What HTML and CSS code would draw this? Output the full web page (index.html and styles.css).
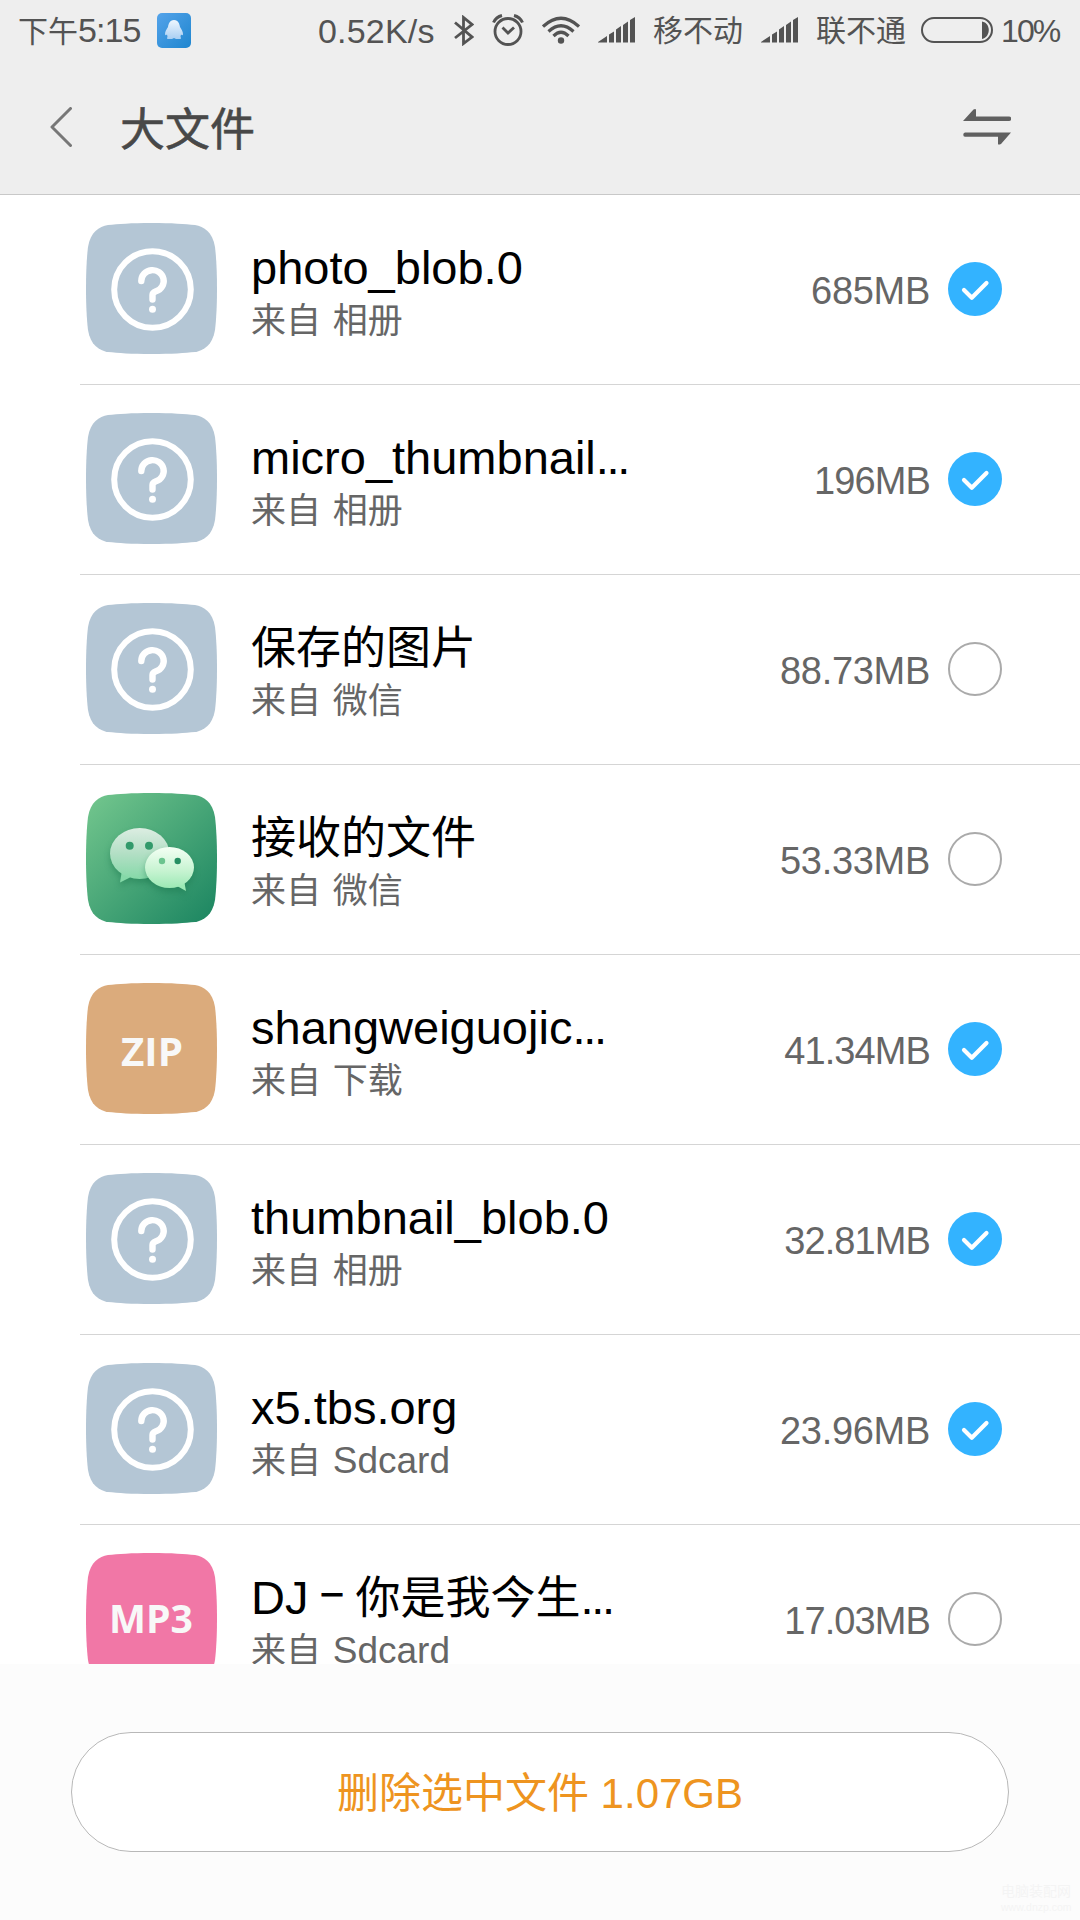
FILE: index.html
```
<!DOCTYPE html>
<html lang="zh">
	<head>
		<meta charset="utf-8">
		<title>大文件</title>
		<link rel="stylesheet" href="styles.css">
	</head>
	<body>
		<!-- shared shapes -->
		<svg class="defs">
			<defs>
				<linearGradient id="wxbg" x1="0" y1="0" x2="1" y2="1">
					<stop offset="0.05" stop-color="#70c48c"/>
					<stop offset="1" stop-color="#1a8460"/>
				</linearGradient>
				<linearGradient id="wx1" x1="0" y1="0" x2="0" y2="1">
					<stop offset="0" stop-color="#dcede2"/>
					<stop offset="0.5" stop-color="#b3dfc5"/>
					<stop offset="1" stop-color="#85d9a8"/>
				</linearGradient>
				<linearGradient id="wx2" x1="0" y1="0" x2="0" y2="1">
					<stop offset="0" stop-color="#f4fff4"/>
					<stop offset="0.6" stop-color="#c5f3d0"/>
					<stop offset="1" stop-color="#9ce9b5"/>
				</linearGradient>
				<linearGradient id="qqbg" x1="0" y1="0" x2="1" y2="1">
					<stop offset="0" stop-color="#54a3ea"/>
					<stop offset="1" stop-color="#1f86cf"/>
				</linearGradient>
				<linearGradient id="qq1" x1="0" y1="0" x2="0" y2="1">
					<stop offset="0" stop-color="#eef6fe"/>
					<stop offset="1" stop-color="#a9cff3"/>
				</linearGradient>
			</defs>
			<symbol id="tile" viewBox="0 0 131 131">
				<path d="M65.500 0C86 0 99 1 109 2C118 3.500 126.500 9 129 24C130.200 34 131 48 131 65.500C131 83 130.200 97 129 107C126.500 122 118 127.500 109 129C99 130 86 131 65.500 131C45 131 32 130 22 129C13 127.500 4.500 122 2 107C0.800 97 0 83 0 65.500C0 48 0.800 34 2 24C4.500 9 13 3.500 22 2C32 1 45 0 65.500 0Z"/>
			</symbol>
			<symbol id="unknown" viewBox="0 0 131 131">
				<use href="#tile" fill="#b4c6d5"/>
				<g fill="none" stroke="#fff" stroke-linecap="round" stroke-linejoin="round">
					<circle cx="66.500" cy="66.500" r="38.300" stroke-width="6"/>
					<path d="M55.300 58A11.200 10.800 0 1 1 70 68.200Q66.500 69.500 66.500 72V76.500" stroke-width="6.400"/>
				</g>
				<circle cx="66.500" cy="86.300" r="3.500" fill="#fff"/>
			</symbol>
			<symbol id="signal" viewBox="0 0 37 26">
				<path d="M0 25L9 19V25.500H0ZM11 17.500L16 14.500V25.500H11ZM18 12.500L23 9V25.500H18ZM25 8L30 4.500V25.500H25ZM32 3L37 0V25.500H32Z"/>
			</symbol>
		</svg>
		<div class="top">
			<div class="status">
				<span class="clock"><span class="cn">下午</span>5:15</span>
				<svg class="qq" viewBox="0 0 34 35">
					<rect width="34" height="35" rx="5" fill="url(#qqbg)"/>
					<path d="M17 7C12.500 7 11.500 11 11 14C9.500 16 8 19 8 21C8 22.500 9 22.500 10 21.500L10.500 23.500Q9.500 25.500 10.500 26H15L17 25L19 26H23.500Q24.500 25.500 23.500 23.500L24 21.500C25 22.500 26 22.500 26 21C26 19 24.500 16 23 14C22.500 11 21.500 7 17 7Z" fill="url(#qq1)"/>
				</svg>
				<span class="speed">0.52K/s</span>
				<svg class="bt" viewBox="0 0 20 31">
					<path d="M1 7.500L18 22L9.500 28.500V2.500L18 9.500L1 23" fill="none" stroke="#535353" stroke-width="2.800"/>
				</svg>
				<svg class="alarm" viewBox="0 0 32 32">
					<g fill="none" stroke="#535353" stroke-width="2.800">
						<circle cx="16" cy="17.500" r="13"/>
						<path d="M10.500 13.500L16 19L22 13.500"/>
						<path d="M1.500 8.500Q4 3 10 1.500M30.500 8.500Q28 3 22 1.500" stroke-width="3"/>
					</g>
				</svg>
				<svg class="wifi" viewBox="0 0 38 28">
					<g fill="none" stroke="#535353" stroke-width="3.200">
						<path d="M1 10.500Q19 -6 37 10.500"/>
						<path d="M6.500 15.500Q19 4 31.500 15.500"/>
						<path d="M11.500 20Q19 12.500 26.500 20"/>
					</g>
					<circle cx="19" cy="24.500" r="3.200" fill="#535353"/>
				</svg>
				<svg class="sig"><use href="#signal"/></svg>
				<span class="cn op">移不动</span>
				<svg class="sig"><use href="#signal"/></svg>
				<span class="cn op">联不通</span>
				<svg class="bat" viewBox="0 0 72 26">
					<rect x="1" y="1" width="70" height="24" rx="12" fill="none" stroke="#535353" stroke-width="2"/>
					<path d="M61 4.500C70 6 70 20 61 22Z" fill="#535353"/>
				</svg>
				<span class="pct">10%</span>
			</div>
			<div class="bar">
				<svg class="back" viewBox="0 0 22 40">
					<path d="M20.500 1.500L2 20L20.500 38.500" fill="none" stroke="#777" stroke-width="3" stroke-linecap="round" stroke-linejoin="round"/>
				</svg>
				<h1>大文件</h1>
				<svg class="swap" viewBox="0 0 48 36">
					<path d="M0 12L10.500 0.500Q13 -0.500 13 1V7.500H46A2.200 2.200 0 0 1 46 12ZM48 23.500L38 35Q35 36 35 35V27.800H2A2.200 2.200 0 0 1 2 23.500Z" fill="#606060"/>
				</svg>
			</div>
		</div>
		<div class="list">
			<div class="item">
				<svg class="icon"><use href="#unknown"/></svg>
				<div class="info">
					<div class="name">photo_blob.0</div>
					<div class="from">来自 相册</div>
				</div>
				<span class="size">685MB</span>
				<span class="check on"><svg viewBox="0 0 54 54"><path d="M16 28L23.800 35.700L38.500 21"/></svg></span>
			</div>
			<div class="item">
				<svg class="icon"><use href="#unknown"/></svg>
				<div class="info">
					<div class="name">micro_thumbnail<span class="dots">...</span></div>
					<div class="from">来自 相册</div>
				</div>
				<span class="size tight">196MB</span>
				<span class="check on"><svg viewBox="0 0 54 54"><path d="M16 28L23.800 35.700L38.500 21"/></svg></span>
			</div>
			<div class="item">
				<svg class="icon"><use href="#unknown"/></svg>
				<div class="info">
					<div class="name"><span class="cn">保存的图片</span></div>
					<div class="from">来自 微信</div>
				</div>
				<span class="size">88.73MB</span>
				<span class="check"></span>
			</div>
			<div class="item">
				<svg class="icon" viewBox="0 0 131 131">
					<use href="#tile" fill="url(#wxbg)"/>
					<g class="shade">
						<path d="M36 77L34 89.500L44 84.500Z" fill="#85d9a8"/>
						<ellipse cx="53.700" cy="60.500" rx="29.700" ry="25.500" fill="url(#wx1)"/>
					</g>
					<circle cx="43.700" cy="52.700" r="4" fill="#329a6b"/>
					<circle cx="63" cy="52.700" r="4" fill="#329a6b"/>
					<g class="shade">
						<path d="M91 93L100 98L98 87Z" fill="#9ce9b5"/>
						<ellipse cx="83.500" cy="74.500" rx="24.500" ry="20.500" fill="url(#wx2)"/>
					</g>
					<circle cx="76" cy="68" r="3.200" fill="#6cc48f"/>
					<circle cx="91.700" cy="68" r="3.200" fill="#268f63"/>
				</svg>
				<div class="info">
					<div class="name"><span class="cn">接收的文件</span></div>
					<div class="from">来自 微信</div>
				</div>
				<span class="size">53.33MB</span>
				<span class="check"></span>
			</div>
			<div class="item">
				<svg class="icon" viewBox="0 0 131 131">
					<use href="#tile" fill="#dbab7c"/>
					<text class="ext" x="35" y="83" textLength="62" lengthAdjust="spacingAndGlyphs">ZIP</text>
				</svg>
				<div class="info">
					<div class="name">shangweiguojic<span class="dots">...</span></div>
					<div class="from">来自 下载</div>
				</div>
				<span class="size tight">41.34MB</span>
				<span class="check on"><svg viewBox="0 0 54 54"><path d="M16 28L23.800 35.700L38.500 21"/></svg></span>
			</div>
			<div class="item">
				<svg class="icon"><use href="#unknown"/></svg>
				<div class="info">
					<div class="name">thumbnail_blob.0</div>
					<div class="from">来自 相册</div>
				</div>
				<span class="size tight">32.81MB</span>
				<span class="check on"><svg viewBox="0 0 54 54"><path d="M16 28L23.800 35.700L38.500 21"/></svg></span>
			</div>
			<div class="item">
				<svg class="icon"><use href="#unknown"/></svg>
				<div class="info">
					<div class="name">x5.tbs.org</div>
					<div class="from">来自 <span class="en">Sdcard</span></div>
				</div>
				<span class="size">23.96MB</span>
				<span class="check on"><svg viewBox="0 0 54 54"><path d="M16 28L23.800 35.700L38.500 21"/></svg></span>
			</div>
			<div class="item">
				<svg class="icon" viewBox="0 0 131 131">
					<use href="#tile" fill="#f177a6"/>
					<text class="ext" x="23" y="80" textLength="84" lengthAdjust="spacingAndGlyphs">MP3</text>
				</svg>
				<div class="info">
					<div class="name">DJ<span class="dash">–</span><span class="cn">你是我今生</span><span class="dots">...</span></div>
					<div class="from">来自 <span class="en">Sdcard</span></div>
				</div>
				<span class="size tight">17.03MB</span>
				<span class="check"></span>
			</div>
		</div>
		<div class="footer">
			<button type="button">删除选中文件 1.07GB</button>
			<div class="mark">电脑装配网<small>www.dnzp.com</small></div>
		</div>
	</body>
</html>
```
FILE: styles.css
```
*{
	box-sizing: border-box;
}
body{
	margin: 0;
	width: 1080px;
	height: 1920px;
	overflow: hidden;
	display: flex;
	flex-direction: column;
	background-color: #fff;
	font-family: "Liberation Sans", "Noto Sans CJK SC", sans-serif;
}
svg{
	display: block;
	flex: none;
}
.defs{
	position: absolute;
	width: 0;
	height: 0;
}
.top{
	height: 195px;
	flex: none;
	background-color: #eee;
	border-bottom: 1px solid #c8c8c8;
}
.status{
	height: 60px;
	display: flex;
	align-items: center;
	padding-left: 18px;
	color: #535353;
	font-size: 34px;
	line-height: 60px;
	white-space: nowrap;
}
.status > span{
	padding-top: 2px;
}
.status .cn{
	font-size: 30px;
}
.clock{
	width: 139px;
	letter-spacing: -0.9px;
}
.clock .cn{
	letter-spacing: 0;
}
.qq{
	width: 34px;
	height: 35px;
}
.speed{
	width: 117px;
	margin-left: 127px;
	letter-spacing: 0.2px;
}
.bt{
	width: 20px;
	height: 31px;
	margin-left: 19px;
}
.alarm{
	width: 32px;
	height: 32px;
	margin-left: 18px;
}
.wifi{
	width: 38px;
	height: 28px;
	margin-left: 18px;
}
.sig{
	width: 37px;
	height: 26px;
	margin-left: 18px;
	fill: #535353;
}
.op{
	width: 90px;
	margin-left: 18px;
}
.bat{
	width: 72px;
	height: 26px;
	margin-left: 15px;
}
.pct{
	margin-left: 8px;
	font-size: 32px;
	letter-spacing: -1.9px;
}
.bar{
	height: 134px;
	display: flex;
	align-items: center;
	padding: 0 69px 0 50px;
}
.back{
	width: 22px;
	height: 40px;
}
h1{
	flex: 1;
	margin: 0 0 0 48px;
	font-size: 45px;
	font-weight: 400;
	line-height: 60px;
	color: #484848;
	-webkit-text-stroke: 0.6px #484848;
	font-family: "Noto Sans CJK SC", sans-serif;
}
.swap{
	width: 48px;
	height: 36px;
}
.list{
	height: 1469px;
	flex: none;
	overflow: hidden;
	padding-left: 80px;
}
.item{
	height: 190px;
	display: flex;
	align-items: center;
	padding: 0 78px 1px 6px;
	border-bottom: 1px solid #d5d5d5;
}
.icon{
	width: 131px;
	height: 131px;
	margin-bottom: 2px;
}
.shade{
	filter: drop-shadow(0 4px 3px rgba(20,110,70,.4));
}
.ext{
	font: bold 39px "Open Sans", sans-serif;
	fill: #f8f8f8;
}
.info{
	flex: 1;
	margin-left: 34px;
	padding-top: 8px;
	white-space: nowrap;
}
.name{
	height: 56px;
	line-height: 56px;
	font-size: 47px;
	color: #000;
}
.name .cn{
	font-size: 45px;
}
.dots{
	letter-spacing: -2.3px;
}
.dash{
	display: inline-block;
	width: 47px;
	height: 56px;
	line-height: 44px;
	vertical-align: top;
	text-align: center;
	font-size: 36px;
	-webkit-text-stroke: 1px #000;
}
.from{
	height: 50px;
	line-height: 50px;
	font-size: 35px;
	word-spacing: 2px;
	color: #666;
}
.from .en{
	font-size: 37px;
}
.size{
	padding-top: 4px;
	font-size: 38px;
	letter-spacing: -0.3px;
	color: #666;
}
.size.tight{
	letter-spacing: -0.9px;
}
.check{
	width: 54px;
	height: 54px;
	margin-left: 18px;
	border: 2px solid #aaa;
	border-radius: 50%;
}
.check.on{
	border: none;
	background-color: #33b3ff;
}
.check path{
	fill: none;
	stroke: #fff;
	stroke-width: 4.2;
	stroke-linecap: round;
	stroke-linejoin: round;
}
.footer{
	flex: 1;
	position: relative;
	padding: 68px 71px 0;
	background-color: #fcfcfc;
}
button{
	display: block;
	width: 938px;
	height: 120px;
	padding: 0 0 5px;
	border: 1px solid #b8b8b8;
	border-radius: 60px;
	background-color: #fff;
	color: #ee9420;
	font-family: inherit;
	font-size: 42px;
}
.mark{
	position: absolute;
	right: 9px;
	bottom: 6px;
	width: 70px;
	font-size: 14px;
	line-height: 18px;
	color: #f4f4f4;
}
.mark small{
	display: block;
	font-size: 10.5px;
	line-height: 14px;
}
```
